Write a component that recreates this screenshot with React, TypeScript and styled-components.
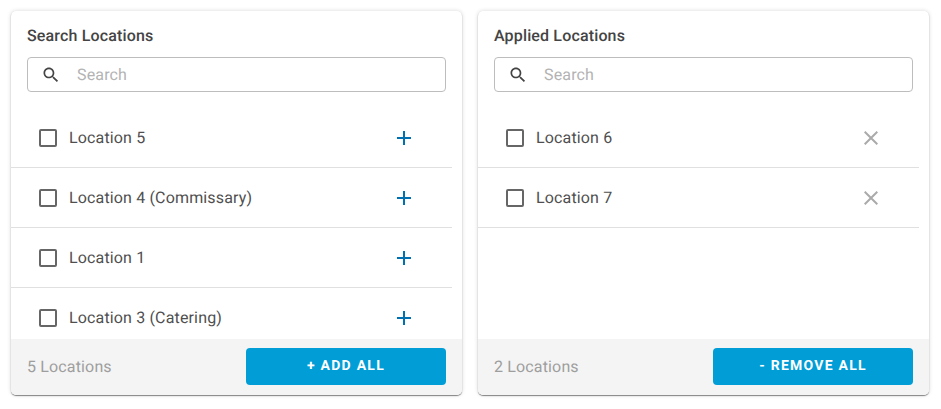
import React from "react";
import styled, { createGlobalStyle } from "styled-components";

const Global = createGlobalStyle`
  html, body { margin: 0; padding: 0; background: #fff; }
  body { font-family: Roboto, "Liberation Sans", sans-serif; text-rendering: geometricPrecision; }
`;

const Page = styled.div`
  display: flex;
  gap: 16px;
  padding: 11px 12px 14px 11px;
  width: 941px;
  height: 409px;
  box-sizing: border-box;
`;

const Card = styled.section`
  flex: 1 1 0;
  min-width: 0;
  display: flex;
  flex-direction: column;
  border-radius: 5px;
  background: #fff;
  overflow: hidden;
  box-shadow: 0 1px 1px 0 rgba(0,0,0,.45), 0 0 4px 0 rgba(0,0,0,.16);
`;

const Head = styled.header`
  padding: 15px 16px 16px;
`;

const Title = styled.h2`
  margin: 0 0 12px;
  font-size: 16px;
  font-weight: 500;
  line-height: 19px;
  letter-spacing: 0.15px;
  color: #444;
`;

const SearchBox = styled.label`
  display: flex;
  align-items: center;
  height: 35px;
  box-sizing: border-box;
  border: 1px solid #bdbdbd;
  border-radius: 4px;
  padding-left: 13px;
  gap: 16px;
`;

const SearchInput = styled.input`
  border: 0;
  outline: 0;
  padding: 0;
  flex: 1;
  min-width: 0;
  font: 400 16px Roboto, sans-serif;
  letter-spacing: 0.15px;
  color: #333;
  background: transparent;
  text-rendering: geometricPrecision;
  &::placeholder { color: #b3b3b3; opacity: 1; }
`;

const List = styled.ul`
  flex: 1;
  min-height: 0;
  margin: 0;
  padding: 0 10px 0 0;
  list-style: none;
  overflow: hidden;
`;

const Row = styled.li`
  display: flex;
  align-items: center;
  height: 60px;
  box-sizing: border-box;
  border-bottom: 1px solid #e0e0e0;
  padding: 0 41px 0 28px;
`;

const Check = styled.span`
  width: 18px;
  height: 18px;
  box-sizing: border-box;
  border: 2px solid #666;
  border-radius: 2px;
  flex: none;
  margin-right: 12px;
`;

const Name = styled.span`
  flex: 1;
  font-size: 16px;
  line-height: 20px;
  letter-spacing: 0.15px;
  color: #4f4f4f;
`;

const IconSlot = styled.span<{ $color: string }>`
  display: flex;
  color: ${(p) => p.$color};
`;

const Foot = styled.footer`
  display: flex;
  align-items: center;
  justify-content: space-between;
  height: 56px;
  flex: none;
  box-sizing: border-box;
  padding: 0 16px;
  background: #f4f4f4;
`;

const Count = styled.span`
  font-size: 16px;
  letter-spacing: 0.15px;
  color: #9e9e9e;
  margin-bottom: 2px;
`;

const ActionButton = styled.button`
  width: 200px;
  height: 37px;
  border: 0;
  border-radius: 4px;
  background: #009dd6;
  color: #fff;
  font: 700 14px Roboto, sans-serif;
  letter-spacing: 1.25px;
  text-transform: uppercase;
  text-rendering: geometricPrecision;
  padding: 0 0 1px;
  margin-top: -1px;
`;

const SearchIcon = () => (
  <svg width="20" height="20" viewBox="0 0 24 24" fill="#444">
    <path d="M15.5 14h-.79l-.28-.27C15.41 12.59 16 11.11 16 9.5 16 5.91 13.09 3 9.5 3S3 5.91 3 9.5 5.91 16 9.5 16c1.61 0 3.09-.59 4.23-1.57l.27.28v.79l5 4.99L20.49 19l-4.99-5zm-6 0C7.01 14 5 11.99 5 9.5S7.01 5 9.5 5 14 7.01 14 9.5 11.99 14 9.5 14z" />
  </svg>
);

const PlusIcon = () => (
  <svg width="14" height="14" viewBox="0 0 14 14" stroke="currentColor" strokeWidth="2" fill="none">
    <path d="M7 0v14M0 7h14" />
  </svg>
);

const CloseIcon = () => (
  <svg width="14" height="14" viewBox="0 0 14 14" stroke="currentColor" strokeWidth="2" fill="none">
    <path d="M.7.7l12.6 12.6M13.3.7L.7 13.3" />
  </svg>
);

type PanelProps = {
  title: string;
  items: string[];
  count: string;
  action: string;
  icon: React.ReactNode;
  iconColor: string;
};

const Panel = ({ title, items, count, action, icon, iconColor }: PanelProps) => (
  <Card>
    <Head>
      <Title>{title}</Title>
      <SearchBox>
        <SearchIcon />
        <SearchInput placeholder="Search" />
      </SearchBox>
    </Head>
    <List>
      {items.map((item) => (
        <Row key={item}>
          <Check />
          <Name>{item}</Name>
          <IconSlot $color={iconColor}>{icon}</IconSlot>
        </Row>
      ))}
    </List>
    <Foot>
      <Count>{count}</Count>
      <ActionButton>{action}</ActionButton>
    </Foot>
  </Card>
);

export default function App() {
  return (
    <>
      <Global />
      <Page>
        <Panel
          title="Search Locations"
          items={["Location 5", "Location 4 (Commissary)", "Location 1", "Location 3 (Catering)"]}
          count="5 Locations"
          action="+ Add all"
          icon={<PlusIcon />}
          iconColor="#0071b0"
        />
        <Panel
          title="Applied Locations"
          items={["Location 6", "Location 7"]}
          count="2 Locations"
          action="- Remove all"
          icon={<CloseIcon />}
          iconColor="#aaaaaa"
        />
      </Page>
    </>
  );
}
